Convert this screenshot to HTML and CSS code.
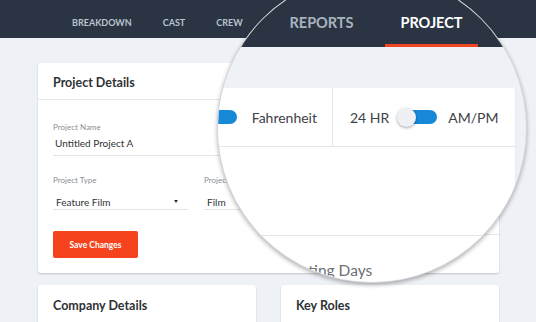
FILE: index.html
```html
<!DOCTYPE html>
<html lang="en">
<head>
    <meta charset="UTF-8">
    <meta name="viewport" content="width=device-width, initial-scale=1.0">
    <title>Project</title>
    <link rel="stylesheet" href="styles.css">
</head>
<body>
    <header class="nav">
        <a href="#">BREAKDOWN</a>
        <a href="#">CAST</a>
        <a href="#">CREW</a>
    </header>

    <main class="content">
        <section class="card details">
            <div class="card-head">Project Details</div>
            <div class="details-body">
                <div class="fields">
                    <div class="field wide">
                        <label>Project Name</label>
                        <div class="value">Untitled Project A</div>
                    </div>
                    <div class="field-row">
                        <div class="field select">
                            <label>Project Type</label>
                            <div class="value">Feature Film <span class="caret"></span></div>
                        </div>
                        <div class="field select">
                            <label>Project</label>
                            <div class="value">Film</div>
                        </div>
                    </div>
                    <button class="save">Save Changes</button>
                </div>
                <div class="side"></div>
            </div>
        </section>

        <div class="row">
            <section class="card small">
                <div class="card-head">Company Details</div>
            </section>
            <section class="card small">
                <div class="card-head">Key Roles</div>
            </section>
        </div>
    </main>

    <!-- magnifier over the settings area -->
    <div class="lens">
        <div class="lens-nav">
            <span class="tab">REPORTS</span>
            <span class="tab active">PROJECT</span>
        </div>
        <div class="lens-card">
            <div class="units">
                <div class="cell temp">
                    <span class="toggle"></span>
                    <span>Fahrenheit</span>
                </div>
                <div class="cell time">
                    <span>24 HR</span>
                    <span class="toggle"></span>
                    <span>AM/PM</span>
                </div>
            </div>
            <div class="blank"></div>
            <div class="shooting">Shooting Days</div>
        </div>
    </div>
</body>
</html>
```

FILE: styles.css
```css
*{
    margin: 0;
    padding: 0;
    box-sizing: border-box;
}
body{
    background-color: #eef1f5;
    font-family: Lato, "Open Sans", sans-serif;
    color: #2e3236;
    overflow: hidden;
}
.nav{
    height: 38px;
    background-color: #2a3443;
    display: flex;
    align-items: center;
    gap: 31px;
    padding-left: 72px;
    padding-top: 6px;
}
.nav a{
    color: #b9c3cd;
    text-decoration: none;
    font-size: 9px;
    font-weight: bold;
}
.content{
    padding: 25px 0 0 38px;
    width: 499px;
}
.card{
    background-color: #fff;
    border-radius: 3px;
    box-shadow: 0 1px 2px rgba(0,0,0,.18);
}
.card-head{
    height: 37px;
    padding: 3px 15px 0;
    display: flex;
    align-items: center;
    font-size: 12.5px;
    font-weight: bold;
    border-bottom: 1px solid #e6e9ec;
}
.details-body{
    display: flex;
}
.fields{
    width: 301px;
    padding: 22px 0 15px 15px;
}
.field label{
    display: block;
    font-size: 8px;
    line-height: 10px;
    color: #8b9096;
}
.field .value{
    font-size: 10px;
    line-height: 14px;
    color: #303336;
    padding: 4px 0 5px 2px;
    border-bottom: 1px solid #e3e6e9;
}
.field-row{
    display: flex;
    gap: 16px;
    margin-top: 19px;
}
.field.select{
    width: 135px;
}
.field.select .value{
    position: relative;
    padding: 10px 0 0 3px;
}
.caret{
    position: absolute;
    right: 10px;
    top: 15px;
    width: 0;
    height: 0;
    border-left: 2.5px solid transparent;
    border-right: 2.5px solid transparent;
    border-top: 3px solid #333;
}
.save{
    margin-top: 21px;
    width: 85px;
    height: 27px;
    border: none;
    border-radius: 2px;
    background-color: #f4431d;
    color: #fff;
    font-family: Lato, sans-serif;
    font-size: 8.5px;
    font-weight: bold;
}
.side{
    flex: 1;
    height: 135px;
    border-bottom: 1px solid #e3e6e9;
}
.row{
    display: flex;
    gap: 25px;
    margin-top: 12px;
}
.card.small{
    width: 218px;
    height: 80px;
}
.card.small .card-head{
    height: 40px;
    padding-top: 2px;
}

/* lens */
.lens{
    position: absolute;
    left: 217px;
    top: -27px;
    width: 310px;
    height: 310px;
    border-radius: 50%;
    overflow: hidden;
    background-color: #eef1f5;
    border: 1px solid rgba(0,0,0,.1);
    box-shadow: 0 2px 4px rgba(0,0,0,.3);
}
.lens-nav{
    height: 73px;
    background-color: #2a3443;
    display: flex;
    gap: 17px;
    padding-left: 57px;
}
.tab{
    width: 93px;
    height: 73px;
    padding-top: 39px;
    line-height: 19px;
    text-align: center;
    font-size: 14.5px;
    font-weight: bold;
    color: #a9b3bf;
}
.tab.active{
    color: #fff;
    border-bottom: 3px solid #ef4422;
}
.lens-card{
    margin-top: 41px;
    margin-left: -101px;
    width: 398px;
    height: 260px;
    background-color: #fff;
    border-radius: 0 3px 3px 0;
    box-shadow: 0 1px 2px rgba(0,0,0,.1);
}
.units{
    display: flex;
    height: 59px;
    border-bottom: 1px solid #e3e6e9;
    font-size: 14px;
    color: #3e4246;
}
.cell{
    display: flex;
    align-items: center;
}
.cell.temp{
    width: 216px;
    justify-content: flex-end;
    gap: 15px;
    padding-right: 15px;
    border-right: 1px solid #e3e6e9;
}
.cell.time{
    padding-left: 17px;
}
.cell.time .toggle{
    margin: 0 11px 0 8px;
}
.toggle{
    position: relative;
    width: 40px;
    height: 19px;
}
.toggle::before{
    content: "";
    position: absolute;
    left: 9px;
    top: 2.5px;
    width: 31px;
    height: 14px;
    border-radius: 7px;
    background-color: #1788d7;
}
.toggle::after{
    content: "";
    position: absolute;
    left: 0;
    top: 0;
    width: 19px;
    height: 19px;
    border-radius: 50%;
    background-color: #eef0f3;
    box-shadow: 0 1px 3px rgba(0,0,0,.35);
}
.blank{
    height: 89px;
    border-bottom: 1px solid #e3e6e9;
}
.shooting{
    padding: 25px 0 0 157px;
    font-size: 15.5px;
    line-height: 18px;
    color: #6b6f74;
}
```
